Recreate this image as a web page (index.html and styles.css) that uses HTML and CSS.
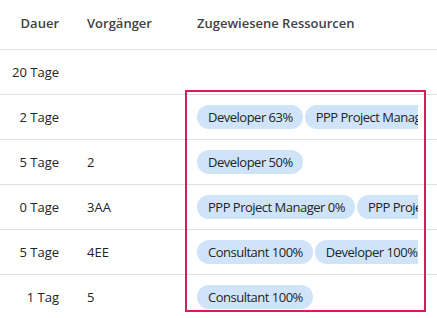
FILE: index.html
```html
<!DOCTYPE html>
<html lang="de">
<head>
<meta charset="utf-8">
<link rel="stylesheet" href="styles.css">
</head>
<body>
<div class="grid">
  <div class="row head">
    <div class="c1">Dauer</div>
    <div class="c2">Vorgänger</div>
    <div class="c3"><div class="clip">Zugewiesene Ressourcen</div></div>
  </div>
  <div class="row">
    <div class="c1">20 Tage</div>
    <div class="c2"></div>
    <div class="c3"><div class="clip"></div></div>
  </div>
  <div class="row">
    <div class="c1">2 Tage</div>
    <div class="c2"></div>
    <div class="c3"><div class="clip"><span class="pill">Developer 63%</span><span class="pill">PPP Project Manager 37%</span></div></div>
  </div>
  <div class="row">
    <div class="c1">5 Tage</div>
    <div class="c2">2</div>
    <div class="c3"><div class="clip"><span class="pill">Developer 50%</span></div></div>
  </div>
  <div class="row">
    <div class="c1">0 Tage</div>
    <div class="c2">3AA</div>
    <div class="c3"><div class="clip"><span class="pill">PPP Project Manager 0%</span><span class="pill">PPP Project Manager 0%</span></div></div>
  </div>
  <div class="row">
    <div class="c1">5 Tage</div>
    <div class="c2">4EE</div>
    <div class="c3"><div class="clip"><span class="pill">Consultant 100%</span><span class="pill">Developer 100%</span></div></div>
  </div>
  <div class="row last">
    <div class="c1">1 Tag</div>
    <div class="c2">5</div>
    <div class="c3"><div class="clip"><span class="pill">Consultant 100%</span></div></div>
  </div>
  <div class="highlight"></div>
</div>
</body>
</html>
```
FILE: styles.css
```css
html, body {
  margin: 0;
  padding: 0;
  background: #fff;
}
body {
  font-family: "Open Sans", "Noto Sans", sans-serif;
  font-size: 13px;
  color: #242424;
}
.grid {
  position: relative;
  width: 437px;
  height: 318px;
  overflow: hidden;
}
.row {
  display: grid;
  grid-template-columns: 74px 112px 1fr;
  height: 44px;
  border-bottom: 1px solid #e1e1e1;
  align-items: center;
}
.row.head {
  height: 45px;
  padding-bottom: 4px;
  color: #424242;
  font-weight: 600;
}
.row.last {
  border-bottom: none;
}
.c1 {
  text-align: right;
  padding-right: 15px;
  white-space: nowrap;
}
.c2 {
  padding-left: 13px;
  white-space: nowrap;
}
.c3 {
  padding-left: 11px;
  min-width: 0;
}
.clip {
  width: 221px;
  overflow: hidden;
  white-space: nowrap;
  display: flex;
  gap: 2px;
}
.pill {
  flex: none;
  display: inline-flex;
  align-items: center;
  height: 24px;
  padding: 0 10px 0 11px;
  border-radius: 12px;
  background: #cfe4f8;
  color: #242424;
  letter-spacing: -0.5px;
}
.highlight {
  position: absolute;
  left: 185px;
  top: 90px;
  width: 237px;
  height: 218px;
  border: 2px solid #d81b5a;
}
```
